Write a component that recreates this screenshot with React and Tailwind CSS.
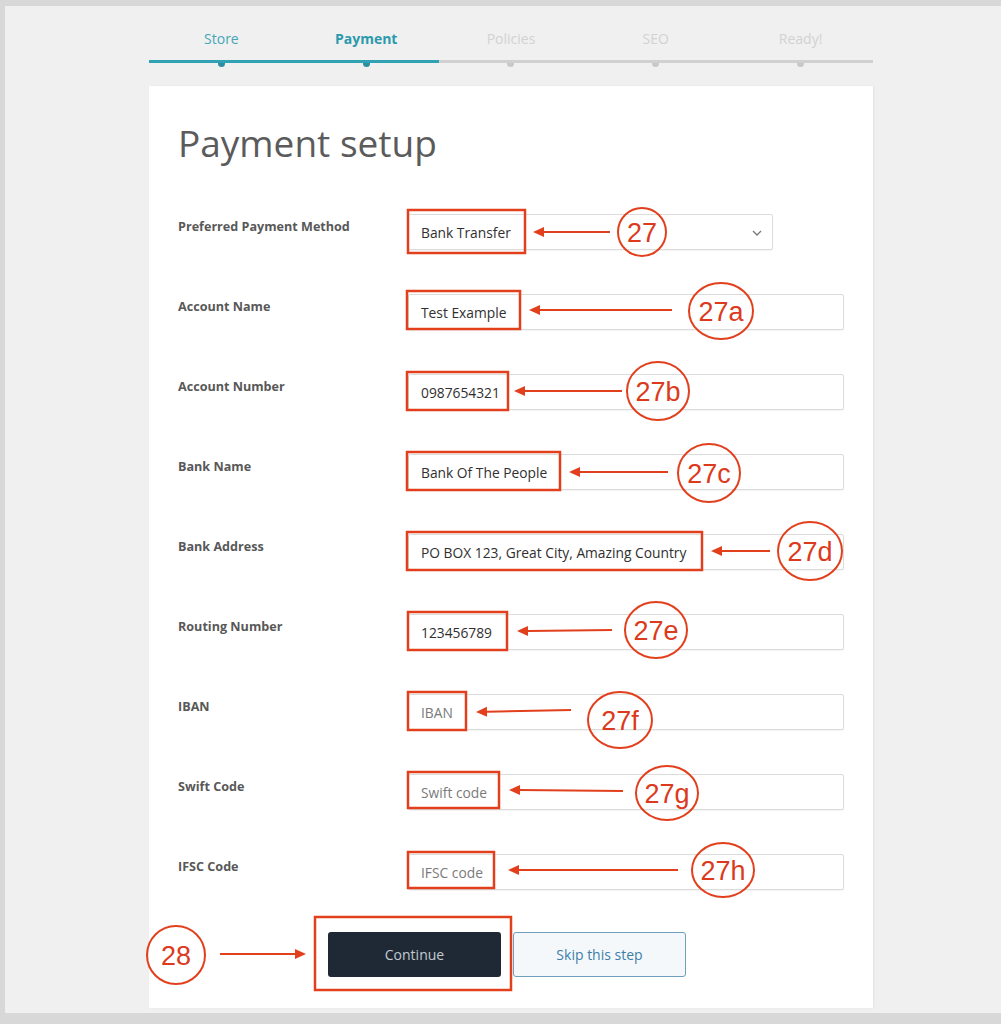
import React from "react";

const steps = [
    { label: "Store", state: "done" },
    { label: "Payment", state: "current" },
    { label: "Policies", state: "todo" },
    { label: "SEO", state: "todo" },
    { label: "Ready!", state: "todo" },
];

const fields = [
    { label: "Account Name", value: "Test Example" },
    { label: "Account Number", value: "0987654321" },
    { label: "Bank Name", value: "Bank Of The People" },
    { label: "Bank Address", value: "PO BOX 123, Great City, Amazing Country" },
    { label: "Routing Number", value: "123456789" },
    { label: "IBAN", placeholder: "IBAN" },
    { label: "Swift Code", placeholder: "Swift code" },
    { label: "IFSC Code", placeholder: "IFSC code" },
];

// annotation overlay: boxes, arrows (tail -> tip) and numbered ellipses
const boxes = [
    [408, 210, 117, 43],
    [407, 291, 113, 38],
    [407, 372, 101, 38],
    [407, 452, 153, 38],
    [407, 532, 295, 38],
    [408, 612, 99, 38],
    [408, 692, 58, 38],
    [408, 772, 91, 36],
    [408, 852, 86, 36],
    [315, 917, 196, 73],
];

const arrows = [
    [610, 232, 533, 232],
    [672, 310, 529, 310],
    [622, 391, 514, 391],
    [668, 472, 569, 472],
    [770, 551, 711, 551],
    [612, 630, 517, 631],
    [571, 710, 476, 712],
    [623, 791, 509, 790],
    [678, 870, 508, 870],
    [220, 954, 306, 954],
];

const tags = [
    { t: "27", cx: 642, cy: 232, rx: 24, ry: 24 },
    { t: "27a", cx: 721, cy: 311, rx: 32, ry: 28 },
    { t: "27b", cx: 658, cy: 391, rx: 31, ry: 29 },
    { t: "27c", cx: 709, cy: 473, rx: 31, ry: 29 },
    { t: "27d", cx: 810, cy: 551, rx: 32, ry: 29 },
    { t: "27e", cx: 656, cy: 630, rx: 31, ry: 28 },
    { t: "27f", cx: 620, cy: 720, rx: 32, ry: 28 },
    { t: "27g", cx: 667, cy: 793, rx: 31, ry: 27 },
    { t: "27h", cx: 723, cy: 870, rx: 31, ry: 27 },
    { t: "28", cx: 176, cy: 955, rx: 29, ry: 29 },
];

const RED = "#e2401d";

const Arrow = ({ a }) => {
    const [x1, y1, x2, y2] = a;
    const ang = Math.atan2(y2 - y1, x2 - x1);
    const len = 11;
    const w = 5;
    const bx = x2 - Math.cos(ang) * len;
    const by = y2 - Math.sin(ang) * len;
    const px = -Math.sin(ang) * w;
    const py = Math.cos(ang) * w;
    return (
        <g>
            <line x1={x1} y1={y1} x2={bx} y2={by} stroke={RED} strokeWidth="2" />
            <polygon points={`${x2},${y2} ${bx + px},${by + py} ${bx - px},${by - py}`} fill={RED} />
        </g>
    );
};

const Annotations = () => (
    <svg
        className="absolute left-0 top-0 pointer-events-none"
        width="1001"
        height="1024"
        viewBox="0 0 1001 1024"
    >
        {boxes.map(([x, y, w, h], i) => (
            <rect key={i} x={x} y={y} width={w} height={h} fill="none" stroke={RED} strokeWidth="2.5" />
        ))}
        {arrows.map((a, i) => (
            <Arrow key={i} a={a} />
        ))}
        {tags.map((c) => (
            <g key={c.t}>
                <ellipse cx={c.cx} cy={c.cy} rx={c.rx} ry={c.ry} fill="none" stroke={RED} strokeWidth="2" />
                <text
                    x={c.cx}
                    y={c.cy + 9.5}
                    textAnchor="middle"
                    fill="#dc3a1c"
                    fontSize="27"
                    fontFamily="'Liberation Sans', Arial, sans-serif"
                >
                    {c.t}
                </text>
            </g>
        ))}
    </svg>
);

const Stepper = () => (
    <div className="w-[724px] ml-[144px] pt-[23px]">
        <div className="flex">
            {steps.map((s) => (
                <div
                    key={s.label}
                    className={`flex-1 text-center text-[14px] leading-5 ${
                        s.state === "current"
                            ? "font-bold text-[#2b9aac]"
                            : s.state === "done"
                            ? "text-[#45a6b6]"
                            : "text-[#d2d2d2]"
                    }`}
                >
                    {s.label}
                </div>
            ))}
        </div>
        <div className="mt-[11px] flex">
            {steps.map((s) => (
                <div key={s.label} className="flex-1 flex flex-col items-center">
                    <div
                        className={`w-full h-[3px] ${
                            s.state === "todo" ? "bg-[#d0d0d0]" : "bg-[#31a2b4]"
                        }`}
                    />
                    <div
                        className={`w-[7px] h-[4px] rounded-b-full ${
                            s.state === "todo" ? "bg-[#c8c8c8]" : "bg-[#2b8fa0]"
                        }`}
                    />
                </div>
            ))}
        </div>
    </div>
);

const Row = ({ label, children }) => (
    <div className="flex items-start">
        <div className="w-[230px] pt-[4px] text-[12.6px] leading-[18px] font-bold text-[#585858]">
            {label}
        </div>
        {children}
    </div>
);

const Input = ({ value, placeholder }) => (
    <div className="w-[436px] h-[36px] flex items-center px-[12px] pt-[2px] bg-white border border-[#dcdcdc] rounded-[2px] shadow-[0_1px_1px_rgba(0,0,0,0.05)] text-[13.8px]">
        {value ? (
            <span className="text-[#303030]">{value}</span>
        ) : (
            <span className="text-[#7a7a7a]">{placeholder}</span>
        )}
    </div>
);

export default function App() {
    return (
        <div
            className="relative w-[1001px] h-[1024px] bg-[#d8d8d8] overflow-hidden"
            style={{ fontFamily: "'Open Sans', 'Noto Sans', sans-serif" }}
        >
            <div className="mt-[6px] ml-[5px] h-[1007px] bg-[#f0f0f0]">
                <Stepper />
                <div className="mt-[19px] ml-[144px] w-[724px] h-[922px] bg-white shadow-[1px_0_2px_rgba(0,0,0,0.06)] px-[29px] pt-[35px]">
                    <h1 className="text-[37px] leading-[43px] text-[#5b5b5b] font-normal">
                        Payment setup
                    </h1>
                    <div className="mt-[50px] flex flex-col gap-[44px]">
                        <Row label="Preferred Payment Method">
                            <div className="w-[365px] h-[36px] flex items-center justify-between pl-[12px] pr-[10px] pt-[2px] bg-white border border-[#dcdcdc] rounded-[2px] shadow-[0_1px_1px_rgba(0,0,0,0.05)] text-[13.8px] text-[#303030]">
                                <span>Bank Transfer</span>
                                <svg width="10" height="6" viewBox="0 0 10 6" fill="none">
                                    <path d="M1 1l4 4 4-4" stroke="#777" strokeWidth="1.3" />
                                </svg>
                            </div>
                        </Row>
                        {fields.map((f) => (
                            <Row key={f.label} label={f.label}>
                                <Input value={f.value} placeholder={f.placeholder} />
                            </Row>
                        ))}
                    </div>
                    <div className="mt-[42px] pl-[150px] flex gap-[12px]">
                        <button className="w-[173px] h-[45px] rounded-[3px] bg-[#1e2935] text-[14px] text-[#c3cad1]">
                            Continue
                        </button>
                        <button className="w-[173px] h-[45px] rounded-[3px] bg-[#f5f8fa] border border-[#6e9fbd] text-[14px] text-[#3c7ea8]">
                            Skip this step
                        </button>
                    </div>
                </div>
            </div>
            <Annotations />
        </div>
    );
}
